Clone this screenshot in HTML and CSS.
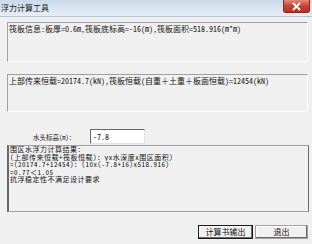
FILE: index.html
```html
<!DOCTYPE html>
<html lang="zh-CN">
<head>
    <meta charset="UTF-8">
    <title>浮力计算工具</title>
    <link rel="stylesheet" href="styles.css">
</head>
<body>
    <div class="window">
        <div class="titlebar">
            <span class="title">浮力计算工具</span>
            <div class="close-btn">
                <svg width="11" height="9" viewBox="0 0 11 9">
                    <path d="M2 1 L9 8 M9 1 L2 8" stroke="#fff" stroke-width="2"/>
                </svg>
            </div>
        </div>

        <div class="client">
            <div class="panel info-panel">
                筏板信息:板厚=0.6m,筏板底标高=-16(m),筏板面积=518.916(m*m)
            </div>

            <div class="panel load-panel">
                上部传来恒载=20174.7(kN),筏板恒载(自重＋土重＋板面恒载)=12454(kN)
            </div>

            <div class="param-row">
                <span class="param-label">水头标高(m):</span>
                <div class="text-input">-7.8</div>
            </div>

            <div class="result-box">
                <div>围区水浮力计算结果:</div>
                <div>(上部传来恒载+筏板恒载)：γx水深度x围区面积)</div>
                <div>=(20174.7+12454)：(10x(-7.8+16)x518.916)</div>
                <div>=0.77＜1.05</div>
                <div>抗浮稳定性不满足设计要求</div>
            </div>

            <div class="button-row">
                <button class="btn btn-default">计算书输出</button>
                <button class="btn">退出</button>
            </div>
        </div>
    </div>
</body>
</html>
```

FILE: styles.css
```css
body {
    margin: 0;
    padding: 0;
    background-color: #f0f0f0;
    font-family: "Noto Sans Mono CJK SC", "Noto Sans CJK SC", monospace;
    font-size: 8px;
    color: #111;
}
.window {
    width: 312px;
    height: 244px;
    overflow: hidden;
}
.titlebar {
    height: 16px;
    display: flex;
    align-items: flex-start;
    justify-content: space-between;
    background: linear-gradient(to bottom, #c9d8ea, #dbe6f2 60%, #e6eef7);
    border-bottom: 1px solid #b4c3d4;
}
.title {
    font-family: "Noto Sans CJK SC", sans-serif;
    font-size: 8px;
    line-height: 16px;
    padding-left: 1px;
    color: #1a1a1a;
}
.close-btn {
    width: 27px;
    height: 13px;
    margin-right: 2px;
    display: flex;
    align-items: center;
    justify-content: center;
    background: linear-gradient(to bottom, #e08a7c, #c9412f 50%, #b8321f);
    border: 1px solid #8a2a1c;
    border-top: none;
    border-radius: 0 0 3px 3px;
    box-sizing: border-box;
}
.client {
    padding: 5px 4px 0 7px;
}
.panel {
    border-top: 1px solid #a0a0a0;
    border-left: 1px solid #a0a0a0;
    border-right: 1px solid #fff;
    border-bottom: 1px solid #fff;
    padding: 1px 1px;
    line-height: 9px;
    white-space: nowrap;
    box-sizing: border-box;
}
.info-panel {
    height: 40px;
}
.load-panel {
    margin-top: 12px;
    height: 38px;
}
.param-row {
    display: flex;
    align-items: center;
    margin-top: 17px;
    height: 15px;
}
.param-label {
    flex-shrink: 0;
    box-sizing: border-box;
    width: 83px;
    padding-right: 18px;
    text-align: right;
    font-size: 6.5px;
}
.text-input {
    flex-shrink: 0;
    width: 55px;
    height: 15px;
    box-sizing: border-box;
    background-color: #fff;
    border-top: 1px solid #696969;
    border-left: 1px solid #696969;
    border-right: 1px solid #e3e3e3;
    border-bottom: 1px solid #e3e3e3;
    padding-left: 2px;
    line-height: 13px;
}
.result-box {
    margin-top: 1px;
    height: 67px;
    width: 302px;
    box-sizing: border-box;
    border-top: 1px solid #a0a0a0;
    border-left: 2px solid #696969;
    border-right: 1px solid #696969;
    border-bottom: 1px solid #a0a0a0;
    padding: 0 1px;
    font-size: 7px;
    line-height: 7.5px;
    letter-spacing: 0.5px;
    white-space: nowrap;
}
.button-row {
    display: flex;
    justify-content: flex-end;
    gap: 2px;
    margin-top: 13px;
}
.btn {
    font-family: "Noto Sans CJK SC", sans-serif;
    font-size: 8px;
    height: 14px;
    width: 53px;
    padding: 0;
    margin: 0;
    background-color: #f0f0f0;
    border: 1px solid #a0a0a0;
    box-shadow: inset -1px -1px 0 #696969, inset 1px 1px 0 #fff;
    color: #111;
    line-height: 12px;
}
.btn-default {
    width: 55px;
    border: 1px solid #1a1a1a;
}
```
